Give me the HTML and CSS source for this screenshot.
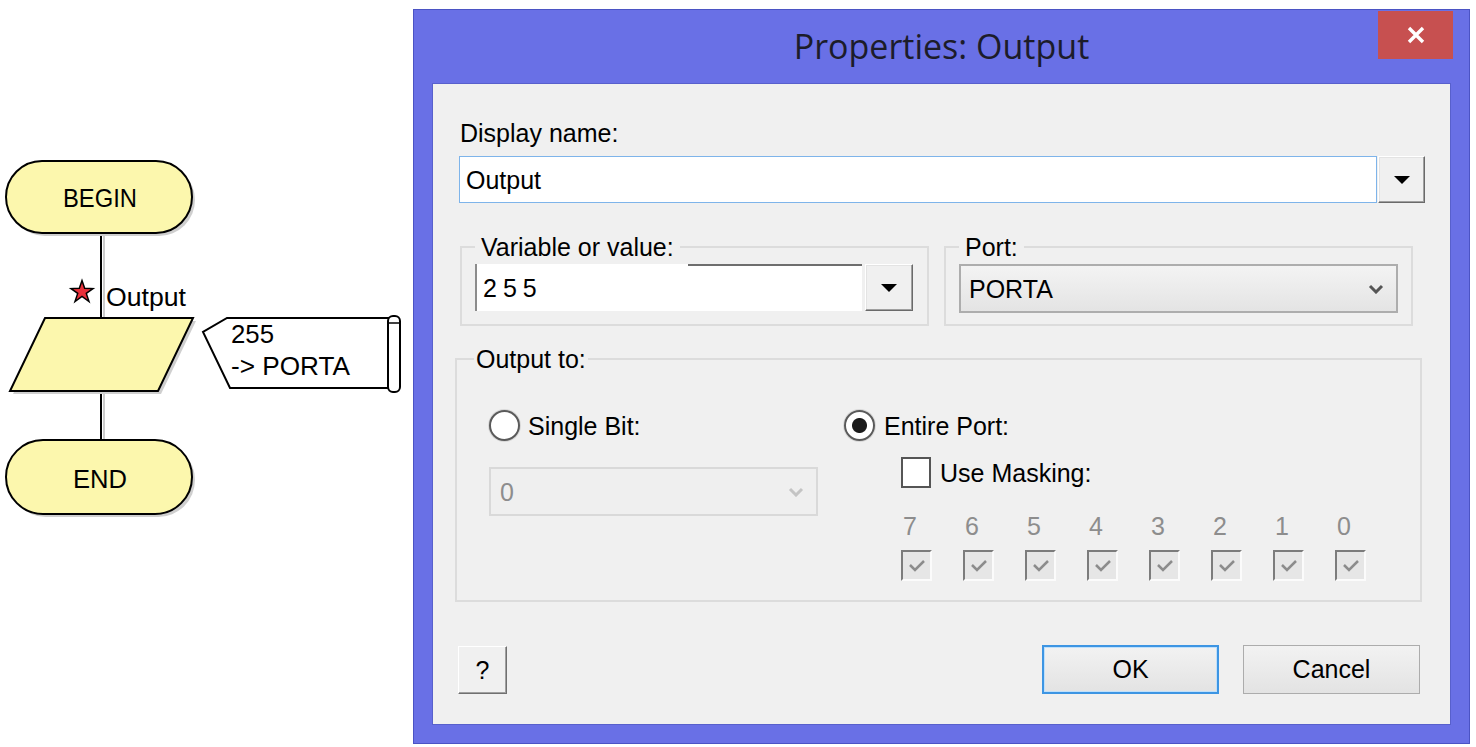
FILE: index.html
```html
<!DOCTYPE html>
<html lang="en">
<head>
  <meta charset="UTF-8">
  <title>Properties: Output</title>
  <meta name="viewport" content="width=device-width, initial-scale=1.0">
  <link rel="stylesheet" href="styles.css">
</head>
<body>

  <svg class="flowchart" width="410" height="747" viewBox="0 0 410 747">
    <!-- connectors -->
    <line x1="104" y1="234" x2="104" y2="318" class="shadow-line"/>
    <line x1="101" y1="234" x2="101" y2="318" class="line"/>
    <line x1="104" y1="392" x2="104" y2="440" class="shadow-line"/>
    <line x1="101" y1="392" x2="101" y2="440" class="line"/>

    <!-- BEGIN -->
    <rect x="9" y="164" width="186" height="72" rx="36" class="shadow"/>
    <rect x="6" y="161" width="186" height="72" rx="36" class="shape"/>
    <text x="100" y="207" text-anchor="middle" textLength="74" lengthAdjust="spacingAndGlyphs" class="fc-text">BEGIN</text>

    <!-- output icon -->
    <polygon points="82,280.5 84.65,288.36 93,288.6 86.28,293.39 89,301.5 82,296.5 75,301.5 77.72,293.39 71,288.6 79.35,288.36" class="star"/>
    <text x="106" y="306" textLength="80" lengthAdjust="spacingAndGlyphs" class="fc-text">Output</text>

    <polygon points="48,321 196,321 161,394 13,394" class="shadow"/>
    <polygon points="45,318 193,318 158,391 10,391" class="shape"/>

    <!-- comment -->
    <polygon points="227,318 389,318 389,388 230,388 203,332" class="note"/>
    <rect x="388" y="316" width="12" height="76" rx="5" class="note"/>
    <line x1="389" y1="323" x2="399" y2="323" class="thin-line"/>
    <text x="231" y="343" textLength="43" lengthAdjust="spacingAndGlyphs" class="fc-text">255</text>
    <text x="231" y="375" textLength="119" lengthAdjust="spacingAndGlyphs" class="fc-text">-&gt; PORTA</text>

    <!-- END -->
    <rect x="9" y="443" width="186" height="74" rx="37" class="shadow"/>
    <rect x="6" y="440" width="186" height="74" rx="37" class="shape"/>
    <text x="100" y="488" text-anchor="middle" textLength="54" lengthAdjust="spacingAndGlyphs" class="fc-text">END</text>
  </svg>

  <div class="window">
    <div class="titlebar">
      <div class="title">Properties: Output</div>
      <div class="close-btn">
        <svg width="20" height="20" viewBox="0 0 20 20"><path d="M3 3 L17 17 M17 3 L3 17" stroke="#fff" stroke-width="3.4"/></svg>
      </div>
    </div>

    <div class="panel">
      <div class="display-label">Display name:</div>
      <div class="combo name-combo">
        <div class="edit focused">Output</div>
        <div class="drop-btn"><svg width="18" height="10" viewBox="0 0 18 10"><polygon points="1,1 17,1 9,9" fill="#000"/></svg></div>
      </div>

      <div class="group-row">
        <fieldset class="group var-group">
          <legend>Variable or value:</legend>
          <div class="combo var-combo">
            <div class="edit sunken"><span class="spaced">255</span></div>
            <div class="drop-btn"><svg width="18" height="10" viewBox="0 0 18 10"><polygon points="1,1 17,1 9,9" fill="#000"/></svg></div>
          </div>
        </fieldset>
        <fieldset class="group port-group">
          <legend>Port:</legend>
          <div class="select">
            <span>PORTA</span>
            <svg width="16" height="10" viewBox="0 0 16 10"><path d="M2 2 L8 8 L14 2" fill="none" stroke="#555" stroke-width="3"/></svg>
          </div>
        </fieldset>
      </div>

      <fieldset class="group output-group">
        <legend>Output to:</legend>
        <div class="output-cols">
          <div class="col-left">
            <div class="radio-row"><span class="radio"></span>Single Bit:</div>
            <div class="select disabled">
              <span>0</span>
              <svg width="16" height="10" viewBox="0 0 16 10"><path d="M2 2 L8 8 L14 2" fill="none" stroke="#c4c4c4" stroke-width="3"/></svg>
            </div>
          </div>
          <div class="col-right">
            <div class="radio-row"><span class="radio checked"></span>Entire Port:</div>
            <div class="check-row"><span class="checkbox"></span>Use Masking:</div>
            <div class="bits">
              <div class="bit"><span>7</span><span class="bit-box"><svg width="20" height="16" viewBox="0 0 20 16"><path d="M3 7 L8 12 L17 3" fill="none" stroke="#8c8c8c" stroke-width="2.5"/></svg></span></div>
              <div class="bit"><span>6</span><span class="bit-box"><svg width="20" height="16" viewBox="0 0 20 16"><path d="M3 7 L8 12 L17 3" fill="none" stroke="#8c8c8c" stroke-width="2.5"/></svg></span></div>
              <div class="bit"><span>5</span><span class="bit-box"><svg width="20" height="16" viewBox="0 0 20 16"><path d="M3 7 L8 12 L17 3" fill="none" stroke="#8c8c8c" stroke-width="2.5"/></svg></span></div>
              <div class="bit"><span>4</span><span class="bit-box"><svg width="20" height="16" viewBox="0 0 20 16"><path d="M3 7 L8 12 L17 3" fill="none" stroke="#8c8c8c" stroke-width="2.5"/></svg></span></div>
              <div class="bit"><span>3</span><span class="bit-box"><svg width="20" height="16" viewBox="0 0 20 16"><path d="M3 7 L8 12 L17 3" fill="none" stroke="#8c8c8c" stroke-width="2.5"/></svg></span></div>
              <div class="bit"><span>2</span><span class="bit-box"><svg width="20" height="16" viewBox="0 0 20 16"><path d="M3 7 L8 12 L17 3" fill="none" stroke="#8c8c8c" stroke-width="2.5"/></svg></span></div>
              <div class="bit"><span>1</span><span class="bit-box"><svg width="20" height="16" viewBox="0 0 20 16"><path d="M3 7 L8 12 L17 3" fill="none" stroke="#8c8c8c" stroke-width="2.5"/></svg></span></div>
              <div class="bit"><span>0</span><span class="bit-box"><svg width="20" height="16" viewBox="0 0 20 16"><path d="M3 7 L8 12 L17 3" fill="none" stroke="#8c8c8c" stroke-width="2.5"/></svg></span></div>
            </div>
          </div>
        </div>
      </fieldset>

      <div class="button-row">
        <button class="btn help-btn">?</button>
        <button class="btn ok-btn">OK</button>
        <button class="btn cancel-btn">Cancel</button>
      </div>
    </div>
  </div>

</body>
</html>
```

FILE: styles.css
```css
* {
  box-sizing: border-box;
}

body {
  margin: 0;
  padding: 0;
  background: #fff;
  font-family: 'Liberation Sans', Arial, sans-serif;
  font-size: 25px;
  color: #000;
  display: flex;
  align-items: flex-start;
}

/* flowchart */

.flowchart {
  display: block;
  flex: none;
}

.flowchart .shape {
  fill: #fcf7ad;
  stroke: #000;
  stroke-width: 2;
}

.flowchart .shadow {
  fill: #cfcfcf;
}

.flowchart .line {
  stroke: #000;
  stroke-width: 2;
}

.flowchart .shadow-line {
  stroke: #cccccc;
  stroke-width: 2;
}

.flowchart .thin-line {
  stroke: #000;
  stroke-width: 1.5;
}

.flowchart .note {
  fill: #fff;
  stroke: #000;
  stroke-width: 2;
}

.flowchart .star {
  fill: #e8303a;
  stroke: #000;
  stroke-width: 1.5;
}

.fc-text {
  font-family: 'Liberation Sans', Arial, sans-serif;
  font-size: 26px;
  fill: #000;
}

/* window */

.window {
  flex: none;
  margin: 9px 0 0 3px;
  width: 1057px;
  height: 735px;
  background: #6970e6;
  border: 1px solid #4b53c4;
  padding: 0 18px 18px 18px;
  display: flex;
  flex-direction: column;
}

.titlebar {
  height: 73px;
  display: grid;
  grid-template-columns: 1fr auto 1fr;
}

.title {
  grid-column: 2;
  align-self: center;
  font-family: 'Open Sans', 'Noto Sans', sans-serif;
  font-size: 34px;
  color: #1c1c2a;
  padding-bottom: 2px;
}

.close-btn {
  grid-column: 3;
  justify-self: end;
  align-self: start;
  margin: 1px -2px 0 0;
  width: 75px;
  height: 48px;
  background: #c75050;
  display: flex;
  align-items: center;
  justify-content: center;
}

.panel {
  flex: 1;
  background: #f0f0f0;
  border: 1px solid #5860cc;
  display: flex;
  flex-direction: column;
  align-items: flex-start;
}

.display-label {
  margin: 34px 0 0 27px;
  line-height: 30px;
}

/* combos and edits */

.combo {
  display: flex;
  height: 47px;
}

.name-combo {
  margin: 8px 0 0 26px;
  width: 966px;
  gap: 1px;
}

.edit {
  flex: 1;
  background: #fff;
  display: flex;
  align-items: center;
  line-height: 30px;
}

.edit.focused {
  border: 1px solid #7eb4ea;
  padding-left: 6px;
}

.edit.sunken {
  border-left: 2px solid #8c8c8c;
  padding-left: 6px;
  background: linear-gradient(#6e6e6e, #6e6e6e) no-repeat right top / 174px 2px, #fff;
}

.spaced {
  letter-spacing: 6px;
}

.drop-btn {
  width: 47px;
  background: #f0f0f0;
  border: 1px solid;
  border-color: #ffffff #6a6a6a #6a6a6a #ffffff;
  box-shadow: inset -1px -1px 0 #a0a0a0, inset 1px 1px 0 #e3e3e3;
  display: flex;
  align-items: center;
  justify-content: center;
}

.var-combo {
  gap: 3px;
}

.var-combo .drop-btn {
  width: 48px;
}

/* group boxes */

.group-row {
  display: flex;
  gap: 15px;
  margin: 29px 0 0 27px;
}

fieldset.group {
  margin: 0;
  min-width: 0;
  border: 2px solid #dcdcdc;
}

fieldset.group legend {
  line-height: 30px;
  padding: 0 6px;
}

fieldset.var-group {
  width: 469px;
  padding: 2px 14px 13px 13px;
}

fieldset.port-group {
  width: 469px;
  padding: 2px 13px 11px 13px;
}

.select {
  height: 49px;
  border: 2px solid #adadad;
  background: linear-gradient(#f3f3f3, #e4e4e4);
  display: flex;
  align-items: center;
  justify-content: space-between;
  padding: 0 12px 0 8px;
  line-height: 30px;
}

.select.disabled {
  width: 329px;
  border: 2px solid #d9d9d9;
  background: #efefef;
  color: #8d8d8d;
}

fieldset.output-group {
  width: 967px;
  margin: 18px 0 0 22px;
  padding: 36px 10px 19px 17px;
}

fieldset.output-group legend {
  padding: 0 2px;
}

.output-cols {
  display: flex;
}

.col-left {
  margin-left: 15px;
  display: flex;
  flex-direction: column;
}

.col-left .select {
  margin-top: 26px;
  padding-left: 9px;
}

.col-right {
  margin-left: 26px;
  display: flex;
  flex-direction: column;
}

.radio-row {
  display: flex;
  align-items: center;
  gap: 9px;
  height: 31px;
  line-height: 30px;
}

.col-left .radio-row {
  gap: 8px;
}

.radio {
  width: 31px;
  height: 31px;
  border-radius: 50%;
  border: 2px solid #5a5a5a;
  background: #fff;
  box-shadow: 0 0 0 1px #d8d8d8;
}

.radio.checked {
  background: radial-gradient(circle, #1b1b1b 0 7px, #fff 8px);
}

.check-row {
  display: flex;
  align-items: center;
  gap: 9px;
  height: 31px;
  margin: 16px 0 0 57px;
  line-height: 30px;
}

.checkbox {
  width: 30px;
  height: 31px;
  border: 2px solid #555;
  background: #fff;
}

.bits {
  display: flex;
  margin: 23px 0 0 57px;
}

.bit {
  width: 62px;
  display: flex;
  flex-direction: column;
  align-items: flex-start;
  color: #8d8d8d;
  line-height: 30px;
}

.bit span:first-child {
  padding-left: 2px;
}

.bit-box {
  margin-top: 9px;
  width: 31px;
  height: 31px;
  border: 2px solid;
  border-color: #7c7c7c #fbfbfb #fbfbfb #7c7c7c;
  background: #e6e6e6;
  display: flex;
  align-items: center;
  justify-content: center;
}

/* buttons */

.button-row {
  align-self: stretch;
  display: flex;
  margin-top: 43px;
  padding: 0 30px 0 25px;
}

.btn {
  height: 49px;
  font-family: 'Liberation Sans', Arial, sans-serif;
  font-size: 25px;
  color: #000;
  background: linear-gradient(#f2f2f2, #e3e3e3);
  border: 1px solid #acacac;
  padding: 0;
}

.help-btn {
  width: 49px;
  height: 48px;
  margin-top: 1px;
  border-color: #ffffff #707070 #707070 #ffffff;
  box-shadow: inset -1px -1px 0 #a0a0a0;
  background: #f0f0f0;
}

.ok-btn {
  width: 177px;
  margin-left: auto;
  border: 2px solid #3d95e3;
  box-shadow: inset 0 0 0 1px #bfe0fb;
}

.cancel-btn {
  width: 177px;
  margin-left: 24px;
}
```
